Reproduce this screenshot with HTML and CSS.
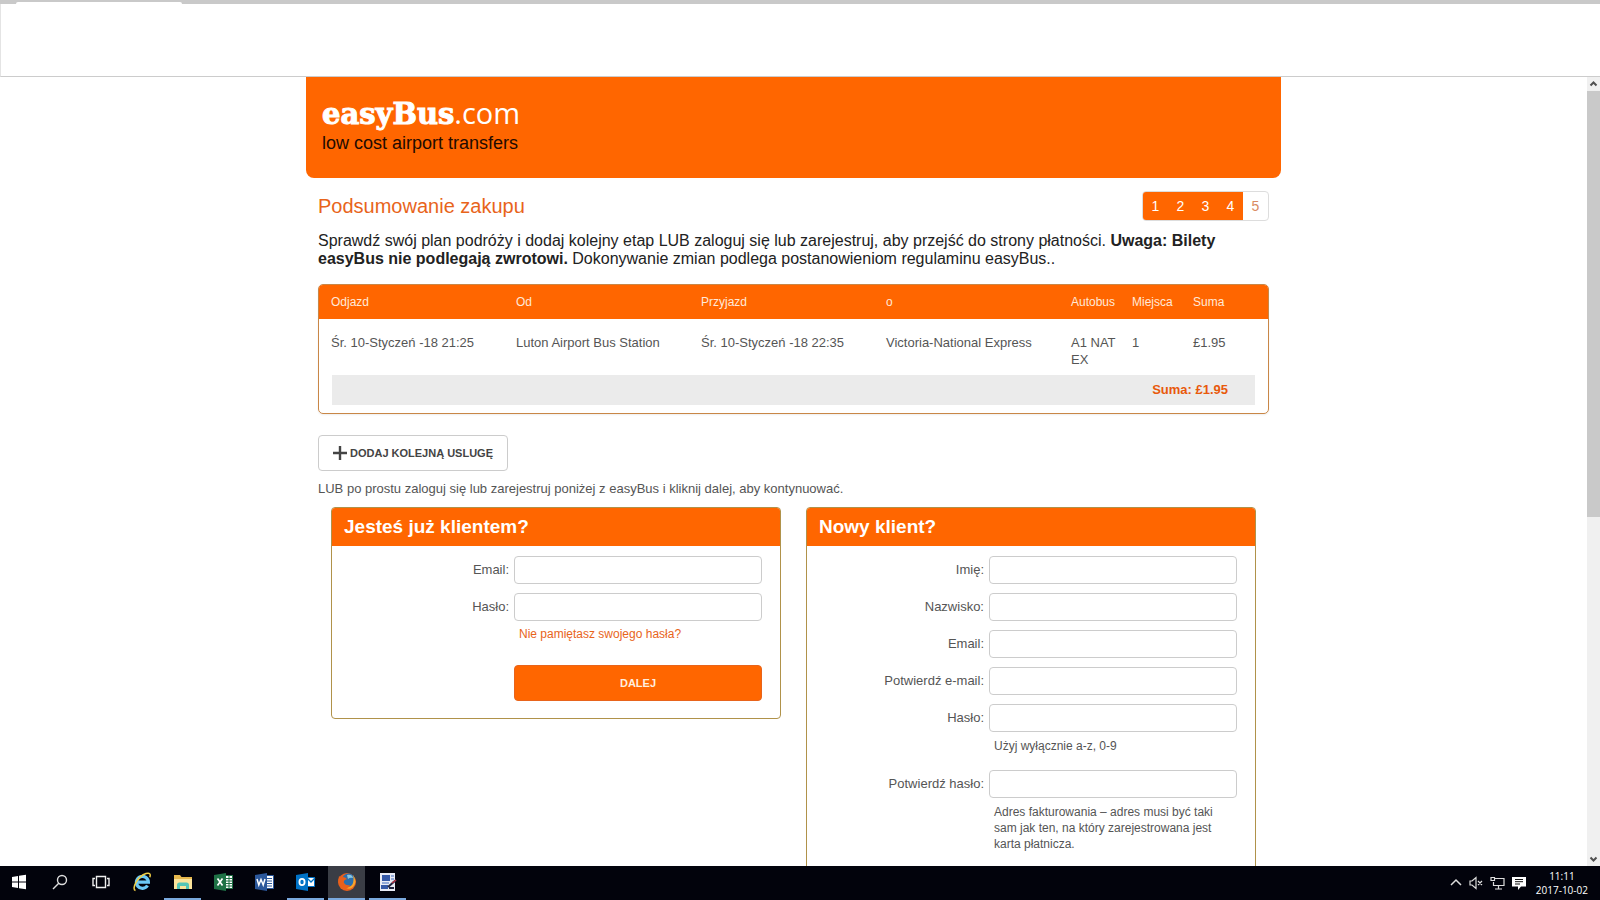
FILE: index.html
```html
<!DOCTYPE html>
<html lang="pl">
<head>
<meta charset="utf-8">
<title>easyBus.com</title>
<link rel="stylesheet" href="styles.css">
</head>
<body>
<div class="tabstrip"><div class="tab"></div></div>
<div class="toolbar"></div>
<div class="viewport">
  <div class="page">
    <header class="banner">
      <div class="logo"><span class="logo-name">easyBus</span><span class="logo-tld">.com</span></div>
      <div class="tagline">low cost airport transfers</div>
    </header>
    <main class="content">
      <div class="title-row">
        <h1 class="title">Podsumowanie zakupu</h1>
        <ol class="steps">
          <li class="step done">1</li><li class="step done">2</li><li class="step done">3</li><li class="step done">4</li><li class="step">5</li>
        </ol>
      </div>
      <p class="intro">Sprawdź swój plan podróży i dodaj kolejny etap LUB zaloguj się lub zarejestruj, aby przejść do strony płatności. <b>Uwaga: Bilety easyBus nie podlegają zwrotowi.</b> Dokonywanie zmian podlega postanowieniom regulaminu easyBus..</p>
      <section class="trips">
        <table class="trip-table">
          <colgroup><col class="wide"><col class="wide"><col class="wide"><col class="wide"><col class="narrow"><col class="narrow"><col></colgroup>
          <thead><tr><th>Odjazd</th><th>Od</th><th>Przyjazd</th><th>o</th><th>Autobus</th><th>Miejsca</th><th>Suma</th></tr></thead>
          <tbody><tr><td>Śr. 10-Styczeń -18 21:25</td><td>Luton Airport Bus Station</td><td>Śr. 10-Styczeń -18 22:35</td><td>Victoria-National Express</td><td>A1 NAT EX</td><td>1</td><td>£1.95</td></tr></tbody>
        </table>
        <div class="total">Suma: £1.95</div>
      </section>
      <button class="add" type="button">
        <svg width="14" height="14" viewBox="0 0 14 14" aria-hidden="true"><path d="M7 0v14M0 7h14" stroke="#444" stroke-width="2.4"/></svg>
        DODAJ KOLEJNĄ USLUGĘ
      </button>
      <p class="or">LUB po prostu zaloguj się lub zarejestruj poniżej z easyBus i kliknij dalej, aby kontynuować.</p>
      <div class="panels">
        <form class="panel">
          <h2 class="panel-title">Jesteś już klientem?</h2>
          <div class="fields">
            <label for="login-email">Email:</label><input id="login-email" type="text">
            <label for="login-pass">Hasło:</label><input id="login-pass" type="password">
            <a class="hint forgot" href="#">Nie pamiętasz swojego hasła?</a>
            <button class="submit" type="button">DALEJ</button>
          </div>
        </form>
        <form class="panel">
          <h2 class="panel-title">Nowy klient?</h2>
          <div class="fields register">
            <label for="first">Imię:</label><input id="first" type="text">
            <label for="last">Nazwisko:</label><input id="last" type="text">
            <label for="mail">Email:</label><input id="mail" type="text">
            <label for="mail2">Potwierdź e-mail:</label><input id="mail2" type="text">
            <label for="pass">Hasło:</label><input id="pass" type="password">
            <p class="hint">Użyj wyłącznie a-z, 0-9</p>
            <label for="pass2">Potwierdź hasło:</label><input id="pass2" type="password">
            <p class="hint">Adres fakturowania – adres musi być taki sam jak ten, na który zarejestrowana jest karta płatnicza.</p>
          </div>
        </form>
      </div>
    </main>
  </div>
  <div class="scrollbar">
    <svg class="arrow" width="13" height="14" viewBox="0 0 13 14" aria-hidden="true"><path d="M3.500 8.500l3-3 3 3" fill="none" stroke="#505050" stroke-width="2"/></svg>
    <div class="track"><div class="thumb"></div></div>
    <svg class="arrow" width="13" height="14" viewBox="0 0 13 14" aria-hidden="true"><path d="M3.500 5.500l3 3 3-3" fill="none" stroke="#505050" stroke-width="2"/></svg>
  </div>
</div>
<footer class="taskbar">
  <nav class="apps">
    <button class="app" type="button" aria-label="Start"><svg width="16" height="16" viewBox="0 0 16 16"><path fill="#fff" d="M1 3l6-1v5.500H1zM8 1.800l7-1v6.700H8zM1 8.500h6V14l-6-1zM8 8.500h7v6.700l-7-1z"/></svg></button>
    <button class="app" type="button" aria-label="Szukaj"><svg width="16" height="16" viewBox="0 0 16 16"><g fill="none" stroke="#ddd" stroke-width="1.400"><circle cx="10" cy="6" r="4.500"/><path d="M7 9l-6 6"/></g></svg></button>
    <button class="app" type="button" aria-label="Widok zadań"><svg width="18" height="16" viewBox="0 0 18 16"><path fill="none" stroke="#eee" stroke-width="1.400" d="M4.500 2.500h9v11h-9zM3 4.500H1v7h2M15 4.500h2v7h-2"/></svg></button>
    <button class="app" type="button" aria-label="Internet Explorer"><svg width="20" height="20" viewBox="0 0 20 20"><g fill="none"><path d="M15.500 13.500a6 6 0 1 1 .9-3.300H6" stroke="#6cc8f5" stroke-width="3.200"/><path d="M3.500 18.500C-1 17 6 4 14 1.500c4-1.200 4.800 1 3.800 3.800" stroke="#f2cf45" stroke-width="1.500"/></g></svg></button>
    <button class="app open" type="button" aria-label="Eksplorator plików"><svg width="20" height="18" viewBox="0 0 20 18"><path fill="#e6b84e" d="M1 2h6l1.500 2H19v12H1z"/><path fill="#fbe39a" d="M1 6h18v10H1z"/><path fill="#55c5b5" d="M4 16v-4q0-2.500 2.500-2.500h7Q16 9.500 16 12v4h-3v-3H7v3z"/></svg></button>
    <button class="app" type="button" aria-label="Excel"><svg width="20" height="18" viewBox="0 0 20 18"><path fill="#fff" stroke="#1e7145" d="M10 2.500h8.500v13H10z"/><path stroke="#1e7145" d="M11 5.500h7M11 8h7M11 10.500h7M11 13h7M15 3v12"/><path fill="#1e7145" d="M0 2l12-2v18L0 16z"/><path stroke="#fff" stroke-width="1.700" d="M3.500 5.500l5 7M8.500 5.500l-5 7"/></svg></button>
    <button class="app" type="button" aria-label="Word"><svg width="20" height="18" viewBox="0 0 20 18"><path fill="#fff" stroke="#2b579a" d="M10 2.500h8.500v13H10z"/><path stroke="#2b579a" d="M12 5.500h5M12 8h5M12 10.500h5M12 13h5"/><path fill="#2b579a" d="M0 2l12-2v18L0 16z"/><path fill="none" stroke="#fff" stroke-width="1.500" d="M2 6l1.800 6L6 6.500 8.200 12 10 6"/></svg></button>
    <button class="app open" type="button" aria-label="Outlook"><svg width="20" height="18" viewBox="0 0 20 18"><path fill="#fff" stroke="#0072c6" d="M10 4.500h8.500v9H10z"/><path fill="none" stroke="#0072c6" stroke-width="1.300" d="M11 5l4 4 4-4"/><path fill="#0072c6" d="M0 2l12-2v18L0 16z"/><ellipse cx="6" cy="9" rx="2.600" ry="3.200" fill="none" stroke="#fff" stroke-width="1.800"/></svg></button>
    <button class="app open active" type="button" aria-label="Firefox"><svg width="20" height="20" viewBox="0 0 20 20"><circle cx="10" cy="10" r="9" fill="#e8601c"/><circle cx="11.500" cy="8" r="6.500" fill="#2b6fae"/><path fill="#8cc8df" d="M10 3q5-1 6 3-3-1-5 1z"/><path fill="#f7a52b" d="M16 3q5 7 0 12-3 3-7 1 6-1 7-5 1-4 0-8z"/><path fill="#e8601c" d="M2 4q2 2 4 1 2 0 4 2-4 1-3 4 2 3 6 2-3 5-8 3-5-4-3-12z"/></svg></button>
    <button class="app open" type="button" aria-label="Program"><svg width="18" height="20" viewBox="0 0 18 20"><path fill="#e8ebf5" d="M1 1h15v18H1z"/><path fill="#3559a8" d="M3 3h8v6H3zM2 13h7v4H2z"/><path stroke="#7896cf" stroke-width="1.500" d="M12 4h3M12 7h3M3 11h7"/><path stroke="#20243f" stroke-width="2" d="M17 8l-8 7M10 16h5"/><path stroke="#b23345" stroke-width="1.500" d="M13 11l4-3"/></svg></button>
  </nav>
  <div class="tray">
    <svg width="12" height="16" viewBox="0 0 12 16" aria-hidden="true"><path fill="none" stroke="#ddd" stroke-width="1.500" d="M1 10l5-5 5 5"/></svg>
    <svg width="14" height="16" viewBox="0 0 14 16" aria-hidden="true"><path fill="none" stroke="#ddd" stroke-width="1.200" d="M1 6h2l4-3.500v11L3 10H1zM9 6l4 4M13 6l-4 4"/></svg>
    <svg width="15" height="16" viewBox="0 0 15 16" aria-hidden="true"><path fill="none" stroke="#ddd" stroke-width="1.200" d="M5 3.500h9v7H3.500V7M1 2.500h3.500v3H1zM8.500 11v3M5 14h7"/></svg>
    <svg width="14" height="16" viewBox="0 0 14 16" aria-hidden="true"><path fill="#fff" d="M0 2h14v9.500H9L6 15v-3.500H0z"/><path stroke="#111" d="M3 4.500h8M3 6.700h8M3 9h5"/></svg>
    <div class="clock"><span>11:11</span><span>2017-10-02</span></div>
  </div>
</footer>
</body>
</html>
```
FILE: styles.css
```css
* { box-sizing: border-box; }
body {
  margin: 0;
  height: 100vh;
  display: flex;
  flex-direction: column;
  overflow: hidden;
  background: #fff;
  color: #555;
  font: 13px/17px "Liberation Sans", Arial, sans-serif;
}
h1, h2, p, ol { margin: 0; padding: 0; }
button, input { font: inherit; }

.tabstrip { flex: none; height: 4px; padding: 2px 16px 0; background: #c9c9c9; }
.tab { width: 166px; height: 2px; background: #fff; border-radius: 2px 2px 0 0; }
.toolbar { flex: none; height: 73px; border-bottom: 1px solid #ccc; border-left: 1px solid #e4e4e4; }

.viewport { flex: 1; min-height: 0; display: flex; overflow: hidden; }
.page { flex: 1; min-width: 0; overflow: hidden; }
.banner {
  max-width: 975px;
  height: 101px;
  margin: 0 auto;
  padding: 16px;
  background: #f60;
  border-radius: 0 0 8px 8px;
}
.logo { display: flex; align-items: baseline; line-height: 39px; color: #fff; }
.logo-name { font-family: "DejaVu Serif", serif; font-weight: 700; font-size: 29px; -webkit-text-stroke: 1px #fff; }
.logo-tld { font-family: "Open Sans", sans-serif; font-size: 29px; }
.tagline { color: #220a00; font-size: 18px; line-height: 18px; }

.content { max-width: 975px; margin: 0 auto; padding: 13px 12px 0; }
.title-row { display: flex; justify-content: space-between; align-items: center; }
.title { font-size: 20px; line-height: 28px; font-weight: 400; color: #e8641b; }
.steps { display: flex; list-style: none; border: 1px solid #ddd; border-radius: 4px; overflow: hidden; }
.step { width: 25px; font-size: 14px; line-height: 28px; text-align: center; color: #d98a62; }
.step.done { background: #f60; color: #fff; }
.intro { margin-top: 11px; font-size: 16px; line-height: 18px; color: #222; }

.trips { margin-top: 16px; border: 1px solid #c98747; border-radius: 5px; overflow: hidden; padding-bottom: 8px; box-shadow: 0 1px 2px #eee; }
.trip-table { width: 100%; table-layout: fixed; border-collapse: collapse; }
.wide { width: 185px; }
.narrow { width: 61px; }
.trip-table th, .trip-table td { text-align: left; vertical-align: top; font-weight: 400; padding: 0 4px 0 12px; }
.trip-table th { background: #f60; color: #ffe9d9; font-size: 12px; line-height: 34px; }
.trip-table td { padding-top: 15px; padding-bottom: 7px; }
.total { margin: 0 13px; padding-right: 27px; background: #ebebeb; color: #e8590c; font-weight: 700; line-height: 30px; text-align: right; }

.add {
  display: flex;
  align-items: center;
  gap: 3px;
  height: 36px;
  margin-top: 21px;
  padding: 0 14px;
  background: #fff;
  border: 1px solid #ccc;
  border-radius: 4px;
  color: #444;
  font-size: 11px;
  font-weight: 700;
}
.or { margin-top: 9px; }
.panels { display: grid; grid-template-columns: 1fr 1fr; gap: 25px; align-items: start; padding: 10px 13px 0; }
.panel { border: 1px solid #b0924a; border-radius: 4px; overflow: hidden; }
.panel-title { padding: 0 12px; background: #f60; color: #fff; font-size: 19px; line-height: 38px; }
.fields { display: grid; grid-template-columns: 177px 1fr; column-gap: 5px; row-gap: 9px; padding: 10px 18px 17px 0; }
.fields label { text-align: right; line-height: 27px; }
.fields input { width: 100%; height: 28px; padding: 0 8px; background: #fff; border: 1px solid #ccc; border-radius: 4px; }
.hint { grid-column: 2; margin-top: -4px; padding: 0 20px 0 5px; font-size: 12px; line-height: 16px; }
.forgot { color: #e8641b; text-decoration: none; }
.submit { grid-column: 2; height: 36px; margin-top: 14px; background: #f60; border: 1px solid #e8641b; border-radius: 4px; color: #ffeede; font-size: 11px; font-weight: 700; }
.register { padding-bottom: 60px; }
.register .hint { padding-bottom: 7px; margin-top: -3px; }

.scrollbar { flex: none; width: 13px; display: flex; flex-direction: column; background: #f0f0f0; }
.arrow { flex: none; }
.track { flex: 1; }
.thumb { height: 56%; background: #c9c9c9; }

.taskbar { flex: none; height: 34px; display: flex; justify-content: space-between; background: #02030c; color: #fff; }
.apps { display: flex; gap: 4px; }
.app { display: flex; align-items: center; justify-content: center; width: 37px; padding: 0; background: none; border: 0; border-bottom: 2px solid transparent; }
.app.open { border-color: #7aa9de; }
.app.active { background: #3a3d45; }
.tray { display: flex; align-items: center; gap: 7px; padding-right: 12px; }
.clock { display: flex; flex-direction: column; align-items: center; margin-left: 3px; font: 10px/14px "Open Sans", sans-serif; }
```
